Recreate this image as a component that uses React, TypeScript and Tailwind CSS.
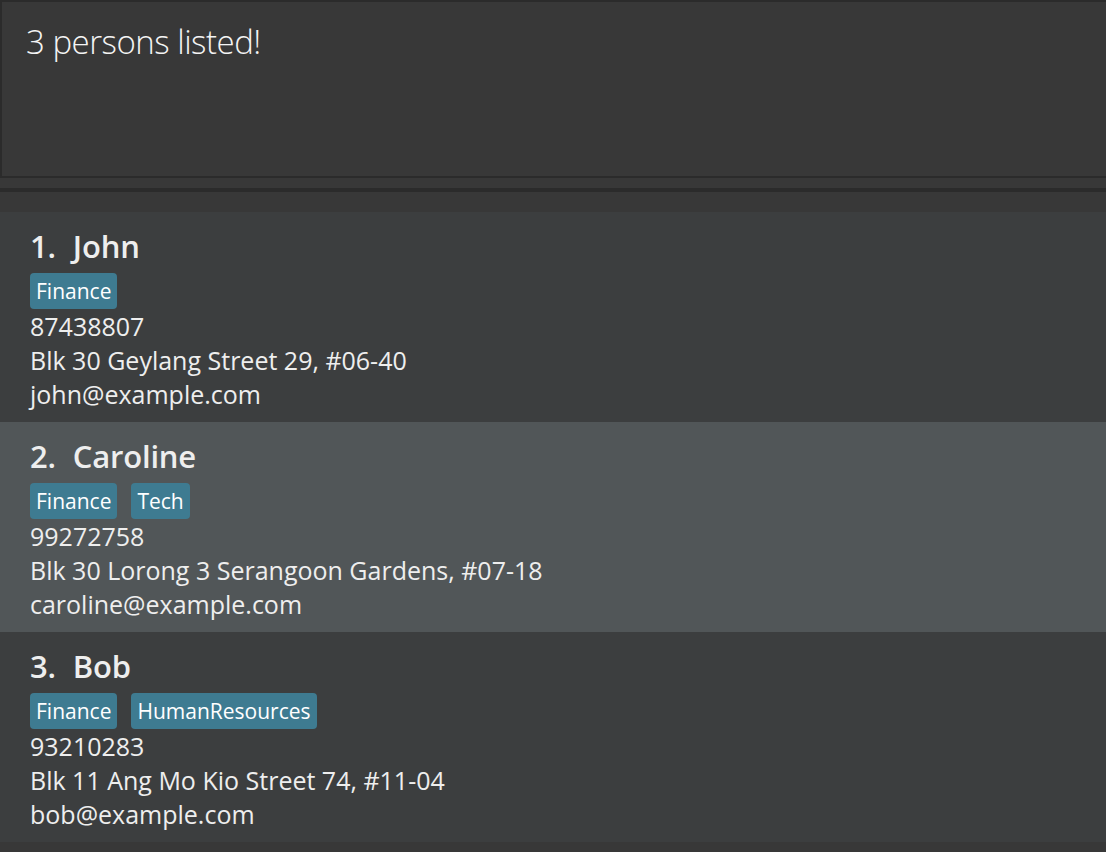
import React from "react";

type Person = {
  name: string;
  tags: string[];
  phone: string;
  address: string;
  email: string;
};

const persons: Person[] = [
  {
    name: "John",
    tags: ["Finance"],
    phone: "87438807",
    address: "Blk 30 Geylang Street 29, #06-40",
    email: "john@example.com",
  },
  {
    name: "Caroline",
    tags: ["Finance", "Tech"],
    phone: "99272758",
    address: "Blk 30 Lorong 3 Serangoon Gardens, #07-18",
    email: "caroline@example.com",
  },
  {
    name: "Bob",
    tags: ["Finance", "HumanResources"],
    phone: "93210283",
    address: "Blk 11 Ang Mo Kio Street 74, #11-04",
    email: "bob@example.com",
  },
];

function Card({ p, i }: { p: Person; i: number }) {
  const odd = i % 2 === 1;
  return (
    <div
      className={
        "pl-[30px] pt-[12px] pb-[11px] " +
        (odd ? "bg-[#515658]" : "bg-[#3c3e3f]")
      }
    >
      <div className="flex text-[31px] leading-[44px] font-semibold tracking-[-0.2px] text-[#eeeeee]">
        <span>{i + 1 + "."}</span>
        <span className="ml-[17px]">{p.name}</span>
      </div>
      <div className="mt-[5px] flex gap-[14px]">
        {p.tags.map((t) => (
          <span
            key={t}
            className="h-[36px] px-[6px] rounded-[4px] bg-[#3e7b91] text-white text-[21px] font-medium leading-[36px]"
          >
            {t}
          </span>
        ))}
      </div>
      <div className="text-[25px] leading-[34px] text-[#eeeeee]">
        <div>{p.phone}</div>
        <div>{p.address}</div>
        <div>{p.email}</div>
      </div>
    </div>
  );
}

export default function App() {
  return (
    <div
      className="w-[1106px] h-[852px] overflow-hidden bg-[#383838] flex flex-col"
      style={{ fontFamily: '"Open Sans", "Noto Sans", sans-serif' }}
    >
      <div className="h-[2px] bg-[#2b2b2b] shrink-0" />
      <div className="h-[176px] shrink-0 border-l-2 border-b-2 border-[#2b2b2b] bg-[#383838] pl-[24px] pt-[15px]">
        <div className="text-[33px] font-light leading-[50px] tracking-[-0.5px] text-[#f4f4f4]">
          3 persons listed!
        </div>
      </div>
      <div className="h-[10px] shrink-0" />
      <div className="h-[4px] bg-[#2b2b2b] shrink-0" />
      <div className="h-[20px] shrink-0" />
      <div className="flex flex-col">
        {persons.map((p, i) => (
          <Card key={p.name} p={p} i={i} />
        ))}
      </div>
    </div>
  );
}
